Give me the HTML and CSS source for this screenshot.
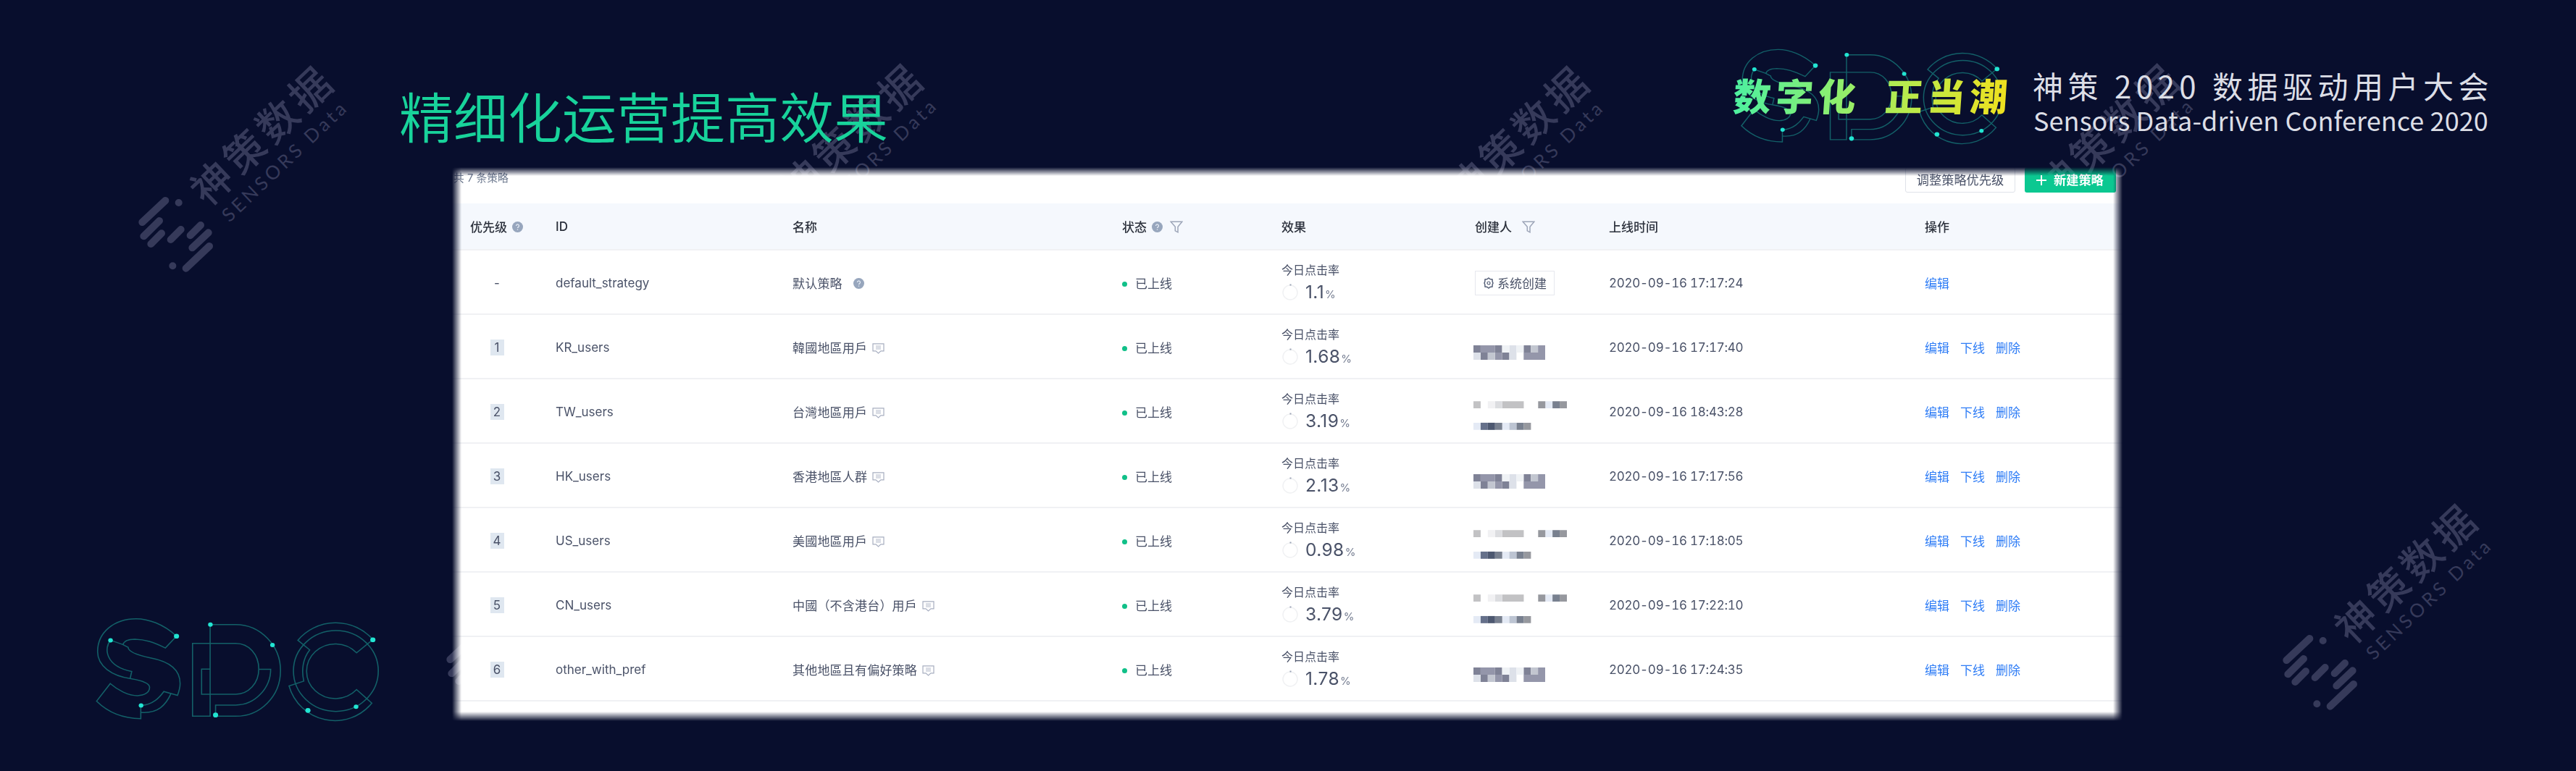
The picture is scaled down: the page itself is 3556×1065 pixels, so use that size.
FILE: index.html
```
<!DOCTYPE html>
<html lang="zh-CN">
<head>
  <meta charset="UTF-8">
  <meta name="viewport" content="width=device-width, initial-scale=1.0">
  <title>精细化运营提高效果</title>
  <link rel="stylesheet" href="styles.css">
</head>
<body>
  <svg class="defs" width="0" height="0">
    <symbol id="sdc" viewBox="80 90 1120 440" preserveAspectRatio="none">
      <g class="sdc-lines">
        <path d="M401 176C350 125 290 104 245 104C160 104 96 160 96 240C96 300 150 340 225 352C270 360 297 370 297 388C297 410 275 422 250 422C215 422 175 400 145 372L92 445C135 490 190 517 263 517V463C310 460 335 430 352 405L405 421C412 400 415 390 415 372C415 310 370 280 300 266C250 255 214 240 214 222L192 210L146 193C120 225 125 300 228 322L222 350"/>
        <path d="M401 176L358 225C310 200 280 190 240 189C215 189 198 195 194 212"/>
        <path d="M263 491C330 497 360 460 380 413"/>
        <path d="M531 312H498V416H630C680 416 719 370 719 312C719 250 680 206 630 206H463V507H531V128H630C725 128 803 215 803 318C803 425 725 507 630 507H552V461H630C705 461 765 390 765 313H719"/>
        <ellipse cx="1017" cy="320" rx="164" ry="167"/>
        <path d="M1160 190L1097 245A111 113 0 1 0 1097 397L1156 453A184 196 0 0 1 836 382L893 362C884 320 888 270 916 233L870 193A190 200 0 0 1 1160 190"/>
      </g>
      <g class="sdc-dots">
        <circle cx="401" cy="176" r="10"/><circle cx="146" cy="193" r="9"/><circle cx="264" cy="463" r="9"/>
        <circle cx="532" cy="128" r="9"/><circle cx="772" cy="213" r="9"/><circle cx="552" cy="502" r="10"/>
        <circle cx="1160" cy="191" r="10"/><circle cx="909" cy="483" r="10"/><circle cx="1095" cy="468" r="9"/>
      </g>
    </symbol>
    <symbol id="mark" viewBox="0 0 1500 1020">
      <g class="mark-bars">
        <path d="M205 651L109 741M180 735L115 799M189 787L145 831M269 771L227 813M351 753L308 796M383 784L316 847M387 840L290 932"/>
        <path d="M260 660h.1M235 922h.1"/>
      </g>
      <g transform="translate(603 384) rotate(-43.6)">
        <text class="mark-cn" x="-367" y="62">神策数据</text>
      </g>
      <g transform="translate(470 744) rotate(-43.6)">
        <text class="mark-en" x="0" y="0">SENSORS Data</text>
      </g>
    </symbol>
    <symbol id="help" viewBox="0 0 16 16">
      <circle cx="8" cy="8" r="8" fill="#97a6bd"/>
      <path d="M5.9 6.3a2.1 2.1 0 1 1 3.2 1.8c-.8.5-1.1.8-1.1 1.6M8 11.3v1.2" fill="none" stroke="#e6ecf5" stroke-width="1.4"/>
    </symbol>
    <symbol id="filter" viewBox="0 0 18 17">
      <path d="M1.2 1.2H16.8L11 8.2V15.8L7.3 13.8V8.2Z" fill="none" stroke="#9da5b8" stroke-width="1.5"/>
    </symbol>
    <symbol id="shield" viewBox="0 0 17 15">
      <path d="M1 .8H16V10.8H12L8.5 14L5 10.8H1Z" fill="none" stroke="#a7aec0" stroke-width="1.2"/>
      <path d="M5 4h7M5 6h7M5 8h7" stroke="#b7bdcc" stroke-width="1"/>
    </symbol>
    <symbol id="gear" viewBox="0 0 14 16">
      <path d="M7 1L9 2.6L12 3L12.2 6L13 8L12.2 10L12 13L9 13.4L7 15L5 13.4L2 13L1.8 10L1 8L1.8 6L2 3L5 2.6Z" fill="none" stroke="#566078" stroke-width="1.5"/>
      <circle cx="7" cy="8" r="2" fill="none" stroke="#566078" stroke-width="1.2"/>
    </symbol>
    <symbol id="ring" viewBox="0 0 24 28">
      <circle cx="12" cy="17" r="10" fill="none" stroke="#f0f1f3" stroke-width="1.5"/>
      <path d="M11.5 6.5h2" stroke="#9aa2b4" stroke-width="2"/>
    </symbol>
    <!-- pixelated creator names -->
    <symbol id="pixel-short" viewBox="0 0 100 20">
      <path fill="#9496aa" d="M10 0h20v10H10zM30 10h10v10H30zM90 0h10v10H90zM70 10h30v10H70z"/>
      <path fill="#7f8296" d="M0 0h10v10H0zM30 0h10v10H30zM10 10h10v10H10zM40 10h10v10H40zM70 0h10v10H70z"/>
      <path fill="#c2c6d0" d="M20 10h10v10H20zM80 0h10v10H80z"/>
      <path fill="#dde1e9" d="M0 10h10v10H0zM50 0h10v10H50zM50 10h10v10H50z"/>
      <path fill="#eff2f5" d="M40 0h10v10H40zM60 0h10v10H60z"/>
    </symbol>
    <symbol id="pixel-long" viewBox="0 0 130 40">
      <path fill="#c2c2c4" d="M0 0h10v10H0zM40 0h30v10H40z"/>
      <path fill="#dcdde0" d="M30 0h10v10H30z"/>
      <path fill="#e4eaf5" d="M100 0h10v10h-10zM40 30h10v10H40zM0 30h10v10H0z"/>
      <path fill="#bcc4d2" d="M50 30h10v10H50z"/>
      <path fill="#f1f1f3" d="M20 0h10v10H20z"/>
      <path fill="#96989e" d="M90 0h10v10H90zM120 0h10v10h-10zM70 30h10v10H70z"/>
      <path fill="#78808f" d="M110 0h10v10h-10zM30 30h10v10H30zM60 30h10v10H60z"/>
      <path fill="#65708a" d="M10 30h10v10H10z"/>
      <path fill="#4d5870" d="M20 30h10v10H20z"/>
    </symbol>
  </svg>

  <div class="slide">
    <svg class="mark mark-1"><use href="#mark"/></svg>
    <svg class="mark mark-2"><use href="#mark"/></svg>
    <svg class="mark mark-3"><use href="#mark"/></svg>
    <svg class="mark mark-4"><use href="#mark"/></svg>
    <svg class="mark mark-5"><use href="#mark"/></svg>
    <svg class="mark mark-6"><use href="#mark"/></svg>

    <header class="top">
      <h1>精细化运营提高效果</h1>
      <div class="brand">
        <div class="slogan">
          <svg class="slogan-logo"><use href="#sdc"/></svg>
          <span class="slogan-text">数字化<i></i>正当潮</span>
        </div>
        <div class="conference">
          <div class="conference-cn">神策 2020 数据驱动用户大会</div>
          <div class="conference-en">Sensors Data-driven Conference 2020</div>
        </div>
      </div>
    </header>

    <main class="content">
      <svg class="sdc-logo"><use href="#sdc"/></svg>

      <section class="panel">
        <div class="toolbar">
          <span class="total">共 7 条策略</span>
          <button class="btn">调整策略优先级</button>
          <button class="btn btn-primary"><svg width="14" height="14" viewBox="0 0 14 14"><path d="M7 0v14M0 7h14" stroke="#fff" stroke-width="2"/></svg>新建策略</button>
        </div>
        <table>
          <thead>
            <tr>
              <th class="c-order">优先级<svg class="help"><use href="#help"/></svg></th>
              <th class="c-id">ID</th>
              <th class="c-name">名称</th>
              <th class="c-status">状态<svg class="help"><use href="#help"/></svg><svg class="filter"><use href="#filter"/></svg></th>
              <th class="c-effect">效果</th>
              <th class="c-creator">创建人<svg class="filter filter-far"><use href="#filter"/></svg></th>
              <th class="c-time">上线时间</th>
              <th class="c-action">操作</th>
            </tr>
          </thead>
          <tbody>
            <tr>
              <td class="order">-</td>
              <td>default_strategy</td>
              <td class="name">默认策略<svg class="help help-far"><use href="#help"/></svg></td>
              <td><span class="status">已上线</span></td>
              <td><div class="rate-label">今日点击率</div><div class="rate"><svg><use href="#ring"/></svg><b>1.1</b><small>%</small></div></td>
              <td><span class="system"><svg><use href="#gear"/></svg>系统创建</span></td>
              <td class="time">2020-09-16 17:17:24</td>
              <td><a>编辑</a></td>
            </tr>
            <tr>
              <td class="order"><span>1</span></td>
              <td>KR_users</td>
              <td class="name">韓國地區用戶<svg class="shield"><use href="#shield"/></svg></td>
              <td><span class="status">已上线</span></td>
              <td><div class="rate-label">今日点击率</div><div class="rate"><svg><use href="#ring"/></svg><b>1.68</b><small>%</small></div></td>
              <td><svg class="pixel-short"><use href="#pixel-short"/></svg></td>
              <td class="time">2020-09-16 17:17:40</td>
              <td><a>编辑</a><a>下线</a><a>删除</a></td>
            </tr>
            <tr>
              <td class="order"><span>2</span></td>
              <td>TW_users</td>
              <td class="name">台灣地區用戶<svg class="shield"><use href="#shield"/></svg></td>
              <td><span class="status">已上线</span></td>
              <td><div class="rate-label">今日点击率</div><div class="rate"><svg><use href="#ring"/></svg><b>3.19</b><small>%</small></div></td>
              <td><svg class="pixel-long"><use href="#pixel-long"/></svg></td>
              <td class="time">2020-09-16 18:43:28</td>
              <td><a>编辑</a><a>下线</a><a>删除</a></td>
            </tr>
            <tr>
              <td class="order"><span>3</span></td>
              <td>HK_users</td>
              <td class="name">香港地區人群<svg class="shield"><use href="#shield"/></svg></td>
              <td><span class="status">已上线</span></td>
              <td><div class="rate-label">今日点击率</div><div class="rate"><svg><use href="#ring"/></svg><b>2.13</b><small>%</small></div></td>
              <td><svg class="pixel-short"><use href="#pixel-short"/></svg></td>
              <td class="time">2020-09-16 17:17:56</td>
              <td><a>编辑</a><a>下线</a><a>删除</a></td>
            </tr>
            <tr>
              <td class="order"><span>4</span></td>
              <td>US_users</td>
              <td class="name">美國地區用戶<svg class="shield"><use href="#shield"/></svg></td>
              <td><span class="status">已上线</span></td>
              <td><div class="rate-label">今日点击率</div><div class="rate"><svg><use href="#ring"/></svg><b>0.98</b><small>%</small></div></td>
              <td><svg class="pixel-long"><use href="#pixel-long"/></svg></td>
              <td class="time">2020-09-16 17:18:05</td>
              <td><a>编辑</a><a>下线</a><a>删除</a></td>
            </tr>
            <tr>
              <td class="order"><span>5</span></td>
              <td>CN_users</td>
              <td class="name">中國（不含港台）用戶<svg class="shield"><use href="#shield"/></svg></td>
              <td><span class="status">已上线</span></td>
              <td><div class="rate-label">今日点击率</div><div class="rate"><svg><use href="#ring"/></svg><b>3.79</b><small>%</small></div></td>
              <td><svg class="pixel-long"><use href="#pixel-long"/></svg></td>
              <td class="time">2020-09-16 17:22:10</td>
              <td><a>编辑</a><a>下线</a><a>删除</a></td>
            </tr>
            <tr>
              <td class="order"><span>6</span></td>
              <td>other_with_pref</td>
              <td class="name">其他地區且有偏好策略<svg class="shield"><use href="#shield"/></svg></td>
              <td><span class="status">已上线</span></td>
              <td><div class="rate-label">今日点击率</div><div class="rate"><svg><use href="#ring"/></svg><b>1.78</b><small>%</small></div></td>
              <td><svg class="pixel-short"><use href="#pixel-short"/></svg></td>
              <td class="time">2020-09-16 17:24:35</td>
              <td><a>编辑</a><a>下线</a><a>删除</a></td>
            </tr>
          </tbody>
        </table>
      </section>
    </main>
  </div>
</body>
</html>
```
FILE: styles.css
```
* {
  box-sizing: border-box;
}
body {
  margin: 0;
  background-color: #080e2d;
  font-family: Inter, "Noto Sans CJK SC", sans-serif;
}
.defs {
  position: absolute;
}
.slide {
  position: relative;
  width: 3556px;
  height: 1065px;
  overflow: hidden;
}

/* watermarks */
.mark {
  position: absolute;
  width: 500px;
  height: 340px;
  overflow: visible;
}
#mark {
  overflow: visible;
}
.mark-1 { left: 160px; top: 60px; }
.mark-2 { left: 974px; top: 57px; }
.mark-3 { left: 1894px; top: 60px; }
.mark-4 { left: 2709px; top: 57px; }
.mark-5 { left: 585px; top: 664px; }
.mark-6 { left: 3120px; top: 665px; }
.mark-bars {
  fill: none;
  stroke: #363a5a;
  stroke-width: 30;
  stroke-linecap: round;
}
.mark-cn {
  fill: #363a5a;
  font: 500 168px "Noto Sans CJK SC", sans-serif;
  letter-spacing: 19px;
}
.mark-en {
  fill: #363a5a;
  font: 400 78px Lato, sans-serif;
  letter-spacing: 13.5px;
}

/* top line */
.top {
  position: relative;
  display: flex;
  justify-content: space-between;
  height: 231px;
  padding: 64px 114px 0 551px;
}
h1 {
  margin: 40px 0 0;
  font: 350 75px/110px "Noto Sans CJK SC", sans-serif;
  color: #18d39b;
}
.brand {
  display: flex;
}
.slogan {
  position: relative;
  width: 413px;
}
.slogan-logo {
  margin-left: 7px;
  width: 370px;
  height: 136px;
}
.slogan-text {
  position: absolute;
  left: 0;
  top: 31px;
  font: 900 52px/72px "Noto Sans CJK SC", sans-serif;
  letter-spacing: 6.5px;
  white-space: nowrap;
  transform: skewX(-4deg);
  color: transparent;
  background: linear-gradient(90deg, #4df0a0, #a5ee5c 50%, #f2e01c);
  -webkit-background-clip: text;
  background-clip: text;
}
.slogan-text i {
  display: inline-block;
  width: 34px;
}
.conference {
  padding-top: 24px;
  width: 636px;
  color: #dcdee6;
  font-family: "Noto Sans CJK SC", sans-serif;
  white-space: nowrap;
}
.conference-cn {
  font-size: 42px;
  line-height: 60px;
  letter-spacing: 6.5px;
}
.conference-en {
  padding-left: 1px;
  font-size: 36px;
  line-height: 34px;
  letter-spacing: 0.1px;
}

.content {
  position: relative;
  display: flex;
  align-items: flex-end;
  height: 765px;
}
.sdc-logo {
  flex: none;
  width: 400px;
  height: 147px;
  margin: 0 0 -1px 129px;
}
.sdc-lines {
  fill: none;
  stroke: #136068;
  stroke-width: 4.5;
}
.sdc-dots {
  fill: #22e5d2;
}

/* strategy list */
.panel {
  flex: none;
  width: 2306px;
  height: 765px;
  margin-left: 95px;
  overflow: hidden;
  background-color: #fff;
  color: #4a5268;
  font-size: 17px;
  -webkit-mask-image: linear-gradient(90deg, transparent, #000 13px, #000 calc(100% - 13px), transparent), linear-gradient(transparent, #000 12px, #000 calc(100% - 13px), transparent);
  mask-image: linear-gradient(90deg, transparent, #000 13px, #000 calc(100% - 13px), transparent), linear-gradient(transparent, #000 12px, #000 calc(100% - 13px), transparent);
  -webkit-mask-composite: source-in;
  mask-composite: intersect;
}
.toolbar {
  display: flex;
  height: 50px;
}
.total {
  flex: 1;
  padding-left: 2px;
  font-size: 14.8px;
  line-height: 31px;
  color: #6c788e;
}
.btn {
  width: 152px;
  height: 35px;
  margin-right: 13px;
  padding: 0;
  border: 1px solid #dfe2e9;
  border-radius: 3px;
  background-color: #fff;
  color: #4a5268;
  font-family: inherit;
  font-size: 17.2px;
  line-height: 30px;
}
.btn-primary {
  display: flex;
  align-items: center;
  gap: 10px;
  width: 126px;
  margin-right: 9px;
  padding-left: 16px;
  border: none;
  background-color: #0bc891;
  color: #fff;
  font-weight: bold;
}
table {
  width: 2306px;
  table-layout: fixed;
  border-collapse: separate;
  border-spacing: 0;
}
th, td {
  padding: 0;
  text-align: left;
  white-space: nowrap;
  border-bottom: 2px solid #f0f1f4;
}
th {
  height: 65px;
  background-color: #f5f8fd;
  color: #2c313c;
  font-weight: 500;
}
td {
  height: 89px;
  padding-top: 2px;
}
th svg, td svg {
  vertical-align: middle;
}
.c-order { width: 143px; padding-left: 25px; }
.c-id { width: 327px; }
.c-name { width: 455px; }
.c-status { width: 220px; }
.c-effect { width: 267px; }
.c-creator { width: 185px; }
.c-time { width: 436px; }
.help {
  width: 15px;
  height: 15px;
  margin: -3px 0 0 7px;
}
.help-far {
  margin-left: 15px;
}
.filter {
  width: 18px;
  height: 17px;
  margin: -3px 0 0 10px;
}
.filter-far {
  margin-left: 14px;
}
.shield {
  width: 17px;
  height: 15px;
  margin: -2px 0 0 7px;
}
.name {
  letter-spacing: 0.2px;
}
.order {
  padding-right: 19px;
  text-align: center;
}
.order span {
  display: inline-block;
  width: 19px;
  line-height: 22px;
  background-color: #dfe7f0;
}
.status::before {
  content: "";
  display: inline-block;
  width: 7px;
  height: 7px;
  margin: 0 11px 2px 0;
  border-radius: 50%;
  background-color: #10c088;
}
.rate-label {
  font-size: 16px;
  line-height: 22px;
  margin-top: -1px;
}
.rate {
  display: flex;
  align-items: baseline;
  height: 34px;
  line-height: 38px;
}
.rate svg {
  align-self: center;
  width: 24px;
  height: 28px;
  margin-right: 9px;
}
.rate b {
  font-size: 24.5px;
  font-weight: 400;
  letter-spacing: 0.4px;
}
.rate small {
  margin-left: 1px;
  font-size: 15px;
  color: #747c90;
}
.system {
  display: inline-flex;
  align-items: center;
  width: 110px;
  height: 34px;
  padding-left: 11px;
  border: 1px solid #e6e8ee;
}
.system svg {
  width: 14px;
  height: 16px;
  margin-right: 5px;
}
.pixel-short {
  width: 99px;
  height: 20px;
  margin: 14px 0 0 -2px;
}
.pixel-long {
  width: 129px;
  height: 40px;
  margin: 10px 0 0 -2px;
}
.time {
  font-variant-numeric: tabular-nums;
  letter-spacing: -0.25px;
}
a {
  margin-right: 15px;
  color: #2f7df6;
}
```
